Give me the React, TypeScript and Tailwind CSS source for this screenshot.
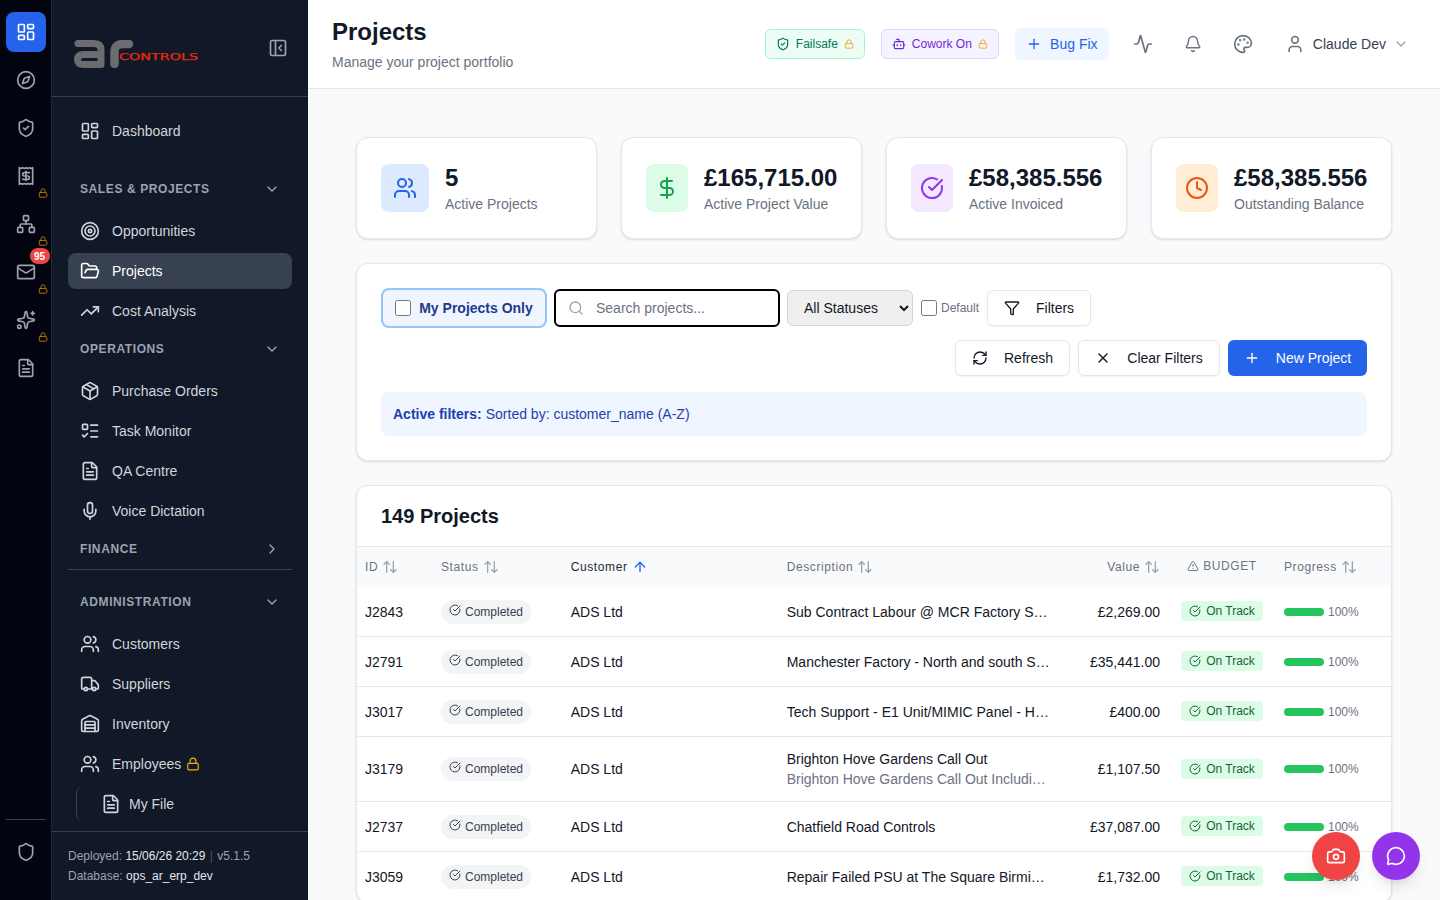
import {
  Activity, ArrowUp, ArrowUpDown, Bell, Bot, ChevronDown, ChevronRight, CircleCheckBig, Clock, Compass,
  Camera, DollarSign, FileText, Filter, FolderOpen, LayoutDashboard, ListTodo, Lock, Mail, MessageCircle,
  Mic, Network, Package, Palette, PanelLeftClose, Plus, Receipt, RefreshCw, Search, Shield, ShieldCheck,
  Sparkles, Target, TrendingUp, TriangleAlert, Truck, User, Users, Warehouse, X,
} from 'lucide-react';
import type { ComponentType, ReactNode } from 'react';

type Icon = ComponentType<{ className?: string; strokeWidth?: number }>;

const railItems: { icon: Icon; locked?: boolean; badge?: string }[] = [
  { icon: Compass },
  { icon: ShieldCheck },
  { icon: Receipt, locked: true },
  { icon: Network, locked: true },
  { icon: Mail, locked: true, badge: '95' },
  { icon: Sparkles, locked: true },
  { icon: FileText },
];

const stats = [
  { icon: Users, value: '5', label: 'Active Projects', box: 'bg-[#dbeafe] w-12', color: 'text-[#2563eb]' },
  { icon: DollarSign, value: '£165,715.00', label: 'Active Project Value', box: 'bg-[#dcfce7] w-[42px]', color: 'text-[#16a34a]' },
  { icon: CircleCheckBig, value: '£58,385.556', label: 'Active Invoiced', box: 'bg-[#f3e8ff] w-[42px]', color: 'text-[#9333ea]' },
  { icon: Clock, value: '£58,385.556', label: 'Outstanding Balance', box: 'bg-[#ffedd5] w-[42px]', color: 'text-[#ea580c]' },
];

const rows = [
  { id: 'J2843', desc: 'Sub Contract Labour @ MCR Factory Site Works', value: '£2,269.00' },
  { id: 'J2791', desc: 'Manchester Factory - North and south Site Works', value: '£35,441.00' },
  { id: 'J3017', desc: 'Tech Support - E1 Unit/MIMIC Panel - Hardware Fault', value: '£400.00' },
  { id: 'J3179', desc: 'Brighton Hove Gardens Call Out', sub: 'Brighton Hove Gardens Call Out Including Travel and Parts', value: '£1,107.50' },
  { id: 'J2737', desc: 'Chatfield Road Controls', value: '£37,087.00' },
  { id: 'J3059', desc: 'Repair Failed PSU at The Square Birmingham Site', value: '£1,732.00' },
];

function NavItem({ icon: Icon, label, active, locked }: { icon: Icon; label: string; active?: boolean; locked?: boolean }) {
  return (
    <div className={`flex h-9 items-center gap-3 rounded-lg px-3 mb-1 text-sm ${active ? 'bg-[#374151] text-white' : 'text-[#d1d5db]'}`}>
      <Icon className="size-5 shrink-0" strokeWidth={2} />
      <span>{label}</span>
      {locked && <Lock className="size-3.5 -ml-[7px] text-[#eab308]" />}
    </div>
  );
}

function SectionHead({ label, open = true, className }: { label: string; open?: boolean; className: string }) {
  return (
    <div className={`flex h-5 items-center justify-between px-3 text-xs font-semibold tracking-wider text-[#9ca3af] ${className}`}>
      <span>{label}</span>
      {open ? <ChevronDown className="size-4" /> : <ChevronRight className="size-4" />}
    </div>
  );
}

function Rail() {
  return (
    <aside className="flex w-[52px] shrink-0 flex-col items-center gap-2 border-r border-[#1f2937] bg-[#020510] pt-3 pb-7">
      <div className="flex size-10 items-center justify-center rounded-lg bg-[#2563eb] text-white">
        <LayoutDashboard className="size-5" />
      </div>
      {railItems.map(({ icon: Icon, locked, badge }, i) => (
        <div key={i} className="relative flex size-10 items-center justify-center text-[#9ca3af]">
          <Icon className="size-5" />
          {locked && <Lock className="absolute -bottom-0.5 right-[-2px] size-2.5 text-[#ca8a04]" />}
          {badge && (
            <span className="absolute -top-1 right-[-4px] flex h-4 w-5 items-center justify-center rounded-full bg-[#ef4444] text-[10px] font-bold text-white">
              {badge}
            </span>
          )}
        </div>
      ))}
      <div className="mt-auto w-10 border-t border-[#374151] pt-3">
        <div className="flex size-10 items-center justify-center text-[#9ca3af]">
          <Shield className="size-5" />
        </div>
      </div>
    </aside>
  );
}

function Sidebar() {
  return (
    <aside className="flex w-[256px] shrink-0 flex-col bg-[#111827]">
      <div className="flex h-[97px] shrink-0 items-center justify-between border-b border-[#374151] pl-[22px] pr-5">
        {/* logo */}
        <svg width="126" height="28" viewBox="0 0 126 28" className="mt-[12px]">
          <g fill="none" stroke="#6b6c6f" strokeLinecap="round" strokeLinejoin="round">
            <path strokeWidth="7" d="M4 3.5H20Q27 3.5 27 10V24.5H10Q3.5 24.5 3.5 19.5Q3.5 14.5 10 14.5H27" />
            <path strokeWidth="8.5" d="M40.5 24V12Q40.5 4 49 4H55" />
          </g>
          <text x="45" y="20" textLength="79" lengthAdjust="spacingAndGlyphs" fontSize="8.5" fontWeight="400" stroke="#ea2a0c" strokeWidth="0.25" fill="#ea2a0c" fontFamily="'DejaVu Sans', sans-serif">
            CONTROLS
          </text>
        </svg>
        <PanelLeftClose className="size-5 text-[#9ca3af]" />
      </div>

      <nav className="flex flex-1 flex-col px-4 pt-4">
        <NavItem icon={LayoutDashboard} label="Dashboard" />
        <SectionHead label="SALES & PROJECTS" className="mt-[26px] mb-[14px]" />
        <NavItem icon={Target} label="Opportunities" />
        <NavItem icon={FolderOpen} label="Projects" active />
        <NavItem icon={TrendingUp} label="Cost Analysis" />
        <SectionHead label="OPERATIONS" className="mt-1.5 mb-[14px]" />
        <NavItem icon={Package} label="Purchase Orders" />
        <NavItem icon={ListTodo} label="Task Monitor" />
        <NavItem icon={FileText} label="QA Centre" />
        <NavItem icon={Mic} label="Voice Dictation" />
        <SectionHead label="FINANCE" open={false} className="mt-1.5" />
        <div className="mt-[10px] mb-[22px] border-t border-[#374151]" />
        <SectionHead label="ADMINISTRATION" className="mb-[14px]" />
        <NavItem icon={Users} label="Customers" />
        <NavItem icon={Truck} label="Suppliers" />
        <NavItem icon={Warehouse} label="Inventory" />
        <NavItem icon={Users} label="Employees" locked />
        <div className="ml-2 flex h-9 items-center gap-2 rounded-l-lg border-l border-[#374151] pl-6 text-sm text-[#d1d5db]">
          <FileText className="size-5" />
          <span>My File</span>
        </div>
      </nav>

      <div className="flex h-[69px] shrink-0 flex-col justify-center gap-1 border-t border-[#374151] px-4 text-xs leading-4 text-[#9ca3af]">
        <div>
          Deployed: <span className="text-[#e5e7eb]">15/06/26 20:29</span> <span className="mx-px text-[#4b5563]">|</span> v5.1.5
        </div>
        <div>
          Database: <span className="text-[#e5e7eb]">ops_ar_erp_dev</span>
        </div>
      </div>
    </aside>
  );
}

function Header() {
  return (
    <header className="flex h-[89px] shrink-0 items-center justify-between border-b border-[#e5e7eb] bg-white pl-6 pr-[31px]">
      <div>
        <h1 className="text-2xl font-bold leading-8 text-[#111827]">Projects</h1>
        <p className="mt-1 text-sm text-[#6b7280]">Manage your project portfolio</p>
      </div>
      <div className="flex items-center">
        <div className="flex h-[30px] w-[100px] items-center justify-center gap-1.5 rounded-md border border-[#a7f3d0] bg-[#ecfdf5] text-xs text-[#047857]">
          <ShieldCheck className="size-3.5" />
          <span>Failsafe</span>
          <Lock className="size-2.5 text-[#f59e0b]" />
        </div>
        <div className="ml-4 flex h-[30px] w-[118px] items-center justify-center gap-1.5 rounded-md border border-[#ddd6fe] bg-[#f5f3ff] text-xs text-[#6d28d9]">
          <Bot className="size-3.5" />
          <span>Cowork On</span>
          <Lock className="size-2.5 text-[#f59e0b]" />
        </div>
        <div className="ml-4 flex h-8 w-[94px] items-center justify-center gap-2 rounded-md bg-[#eff6ff] text-sm text-[#2563eb]">
          <Plus className="size-4" />
          <span>Bug Fix</span>
        </div>
        <Activity className="ml-6 size-5 text-[#6b7280]" />
        <Bell className="ml-[31px] size-[18px] text-[#6b7280]" />
        <Palette className="ml-[31px] size-5 text-[#6b7280]" />
        <User className="ml-[32px] size-5 text-[#6b7280]" />
        <span className="ml-2 text-sm text-[#374151]">Claude Dev</span>
        <ChevronDown className="ml-[7px] size-4 text-[#9ca3af]" />
      </div>
    </header>
  );
}

function Card({ className, children }: { className: string; children: ReactNode }) {
  return <div className={`rounded-xl border border-[#e5e7eb] bg-white shadow-sm ${className}`}>{children}</div>;
}

function OutlineButton({ icon: Icon, label, className }: { icon: Icon; label: string; className: string }) {
  return (
    <button className={`flex h-9 items-center justify-center gap-4 rounded-md border border-[#e5e7eb] bg-white text-sm text-[#111827] shadow-xs ${className}`}>
      <Icon className="size-4" />
      {label}
    </button>
  );
}

function SortHead({ label, className = '' }: { label: string; className?: string }) {
  return (
    <th className={`px-2 text-xs font-normal tracking-wider text-[#6b7280] ${className}`}>
      <span className="inline-flex items-center gap-1">
        {label}
        <ArrowUpDown className="size-4 text-[#9ca3af]" />
      </span>
    </th>
  );
}

function ProjectsTable() {
  return (
    <table className="w-full table-fixed border-separate border-spacing-0 text-sm text-[#111827]">
      <colgroup>
        <col className="w-[76px]" />
        <col className="w-[129.7px]" />
        <col className="w-[216px]" />
        <col className="w-[281.3px]" />
        <col className="w-[108px]" />
        <col className="w-[108px]" />
        <col />
      </colgroup>
      <thead>
        <tr className="h-10 bg-[#f9fafb] text-left">
          <SortHead label="ID" />
          <SortHead label="Status" />
          <th className="px-2 text-xs font-normal tracking-wider text-[#1f2937]">
            <span className="inline-flex items-center gap-1">
              Customer
              <ArrowUp className="size-4 text-[#2563eb]" />
            </span>
          </th>
          <SortHead label="Description" />
          <SortHead label="Value" className="text-right" />
          <th className="px-2 text-center text-xs font-normal tracking-wider text-[#6b7280]">
            <span className="inline-flex h-4 items-center gap-1">
              <TriangleAlert className="size-3" />
              BUDGET
            </span>
          </th>
          <SortHead label="Progress" />
        </tr>
      </thead>
      <tbody>
        {rows.map((row) => (
          <tr key={row.id} className={`[&>td]:border-b [&>td]:border-[#e5e7eb] ${row.sub ? 'h-[65px]' : 'h-[50px]'}`}>
            <td className="px-2">{row.id}</td>
            <td className="px-2">
              <span className="inline-flex h-6 items-center gap-1 rounded-full bg-[#f3f4f6] px-2 text-xs text-[#374151]">
                <CircleCheckBig className="mb-1 size-3" />
                Completed
              </span>
            </td>
            <td className="px-2">ADS Ltd</td>
            <td className="px-2">
              <div className="w-[263.5px] truncate">{row.desc}</div>
              {row.sub && <div className="w-[263.5px] truncate text-[#6b7280]">{row.sub}</div>}
            </td>
            <td className="px-2 text-right">{row.value}</td>
            <td className="px-2 text-center">
              <span className="inline-flex h-5 items-center gap-[5px] rounded bg-[#dcfce7] px-2 text-xs text-[#166534]">
                <CircleCheckBig className="size-3" />
                On Track
              </span>
            </td>
            <td className="px-2">
              <div className="flex items-center gap-1">
                <div className="h-2 w-10 rounded-full bg-[#22c55e]" />
                <span className="text-xs text-[#6b7280]">100%</span>
              </div>
            </td>
          </tr>
        ))}
      </tbody>
    </table>
  );
}

export default function App() {
  return (
    <div className="relative flex h-screen overflow-hidden bg-[#f9fafb] font-['Liberation_Sans',sans-serif]">
      <Rail />
      <Sidebar />
      <main className="flex min-w-0 flex-1 flex-col">
        <Header />
        <div className="flex flex-col gap-6 overflow-hidden px-12 pt-12">
          <div className="grid grid-cols-4 gap-6">
            {stats.map(({ icon: Icon, value, label, box, color }) => (
              <Card key={label} className="flex h-[102px] items-center gap-4 pl-6">
                <div className={`flex h-12 shrink-0 items-center justify-center rounded-lg ${box}`}>
                  <Icon className={`size-6 ${color}`} />
                </div>
                <div>
                  <div className="text-2xl font-bold leading-8 text-[#111827]">{value}</div>
                  <div className="text-sm leading-5 text-[#6b7280]">{label}</div>
                </div>
              </Card>
            ))}
          </div>

          <Card className="flex flex-col p-6">
            <div className="flex items-center gap-2">
              <label className="flex h-10 w-[166px] items-center justify-center gap-2 rounded-lg border-2 border-[#93c5fd] bg-[#eff6ff] text-sm font-semibold text-[#1e3a8a]">
                <input type="checkbox" className="size-4" />
                My Projects Only
              </label>
              <div className="-ml-px flex h-[38px] w-[226px] items-center gap-2 rounded-md border-2 border-black bg-white pl-3 text-sm text-[#6b7280]">
                <Search className="size-4 text-[#9ca3af]" />
                <span className="ml-1">Search projects...</span>
              </div>
              <select className="-ml-px h-9 w-[126px] rounded-md border border-[#d1d5db] bg-[#efefef] pl-3 text-sm text-[#111827]">
                <option>All Statuses</option>
              </select>
              <label className="flex items-center gap-1 text-xs text-[#6b7280]">
                <input type="checkbox" className="size-4" />
                Default
              </label>
              <OutlineButton icon={Filter} label="Filters" className="w-[104px]" />
            </div>
            <div className="mt-3 flex justify-end gap-2">
              <OutlineButton icon={RefreshCw} label="Refresh" className="w-[115px]" />
              <OutlineButton icon={X} label="Clear Filters" className="w-[142px]" />
              <button className="flex h-9 w-[139px] items-center justify-center gap-4 rounded-md bg-[#2563eb] text-sm text-white">
                <Plus className="size-4" />
                New Project
              </button>
            </div>
            <div className="mt-4 flex h-11 items-center rounded-lg bg-[#eff6ff] px-3 text-sm text-[#1e40af]">
              <strong className="mr-1 font-semibold">Active filters:</strong> Sorted by: customer_name (A-Z)
            </div>
          </Card>

          <Card className="shrink-0 overflow-hidden">
            <div className="flex h-[61px] items-center border-b border-[#e5e7eb] px-6">
              <h2 className="text-xl font-semibold text-[#111827]">149 Projects</h2>
            </div>
            <ProjectsTable />
          </Card>
        </div>
      </main>

      {/* floating actions */}
      <button className="absolute left-[1312px] top-[832px] flex size-12 items-center justify-center rounded-full bg-[#ef4444] text-white shadow-lg">
        <Camera className="size-5" />
      </button>
      <button className="absolute left-[1372px] top-[832px] flex size-12 items-center justify-center rounded-full bg-[#9333ea] text-white shadow-lg">
        <MessageCircle className="size-5" />
      </button>
    </div>
  );
}
